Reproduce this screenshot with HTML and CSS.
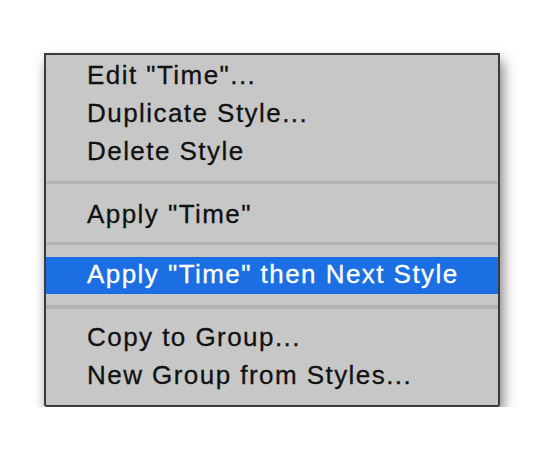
FILE: index.html
```html
<!DOCTYPE html>
<html>
<head>
<meta charset="utf-8">
<link rel="stylesheet" href="styles.css">
</head>
<body>
<div class="page">
  <div class="menu">
    <div class="group first">
      <div class="item">Edit "Time"...</div>
      <div class="item">Duplicate Style...</div>
      <div class="item">Delete Style</div>
    </div>
    <div class="sep"></div>
    <div class="group">
      <div class="item">Apply "Time"</div>
    </div>
    <div class="sep sep2"></div>
    <div class="group">
      <div class="item selected">Apply "Time" then Next Style</div>
    </div>
    <div class="sep sep3"></div>
    <div class="group">
      <div class="item">Copy to Group...</div>
      <div class="item">New Group from Styles...</div>
    </div>
  </div>
</div>
</body>
</html>
```
FILE: styles.css
```css
html, body {
  margin: 0;
  padding: 0;
  background: #ffffff;
}
.page {
  padding: 53px 0 0 44px;
}
.menu {
  width: 452px;
  border: 2px solid #3b3b3b;
  background: #c7c7c7;
  border-radius: 0 0 3px 3px;
  box-shadow: 3px 8px 13px rgba(0, 0, 0, 0.5);
  padding: 1px 0 11px 0;
  font-family: "Liberation Sans", Arial, sans-serif;
  font-size: 26px;
  letter-spacing: 1.45px;
  color: #111111;
  -webkit-text-stroke: 0.3px currentColor;
}
.item {
  height: 38px;
  line-height: 38px;
  padding-left: 41px;
  white-space: nowrap;
}
.sep {
  height: 3px;
  background: #b3b3b3;
  margin: 11px 0 11px 0;
}
.sep2 {
  margin: 9px 0 12px 0;
}
.sep3 {
  margin: 11px 0 9px 0;
  height: 4px;
}
.item.selected {
  background: #1b6fe2;
  color: #ffffff;
  height: 37px;
  line-height: 35px;
}
```
